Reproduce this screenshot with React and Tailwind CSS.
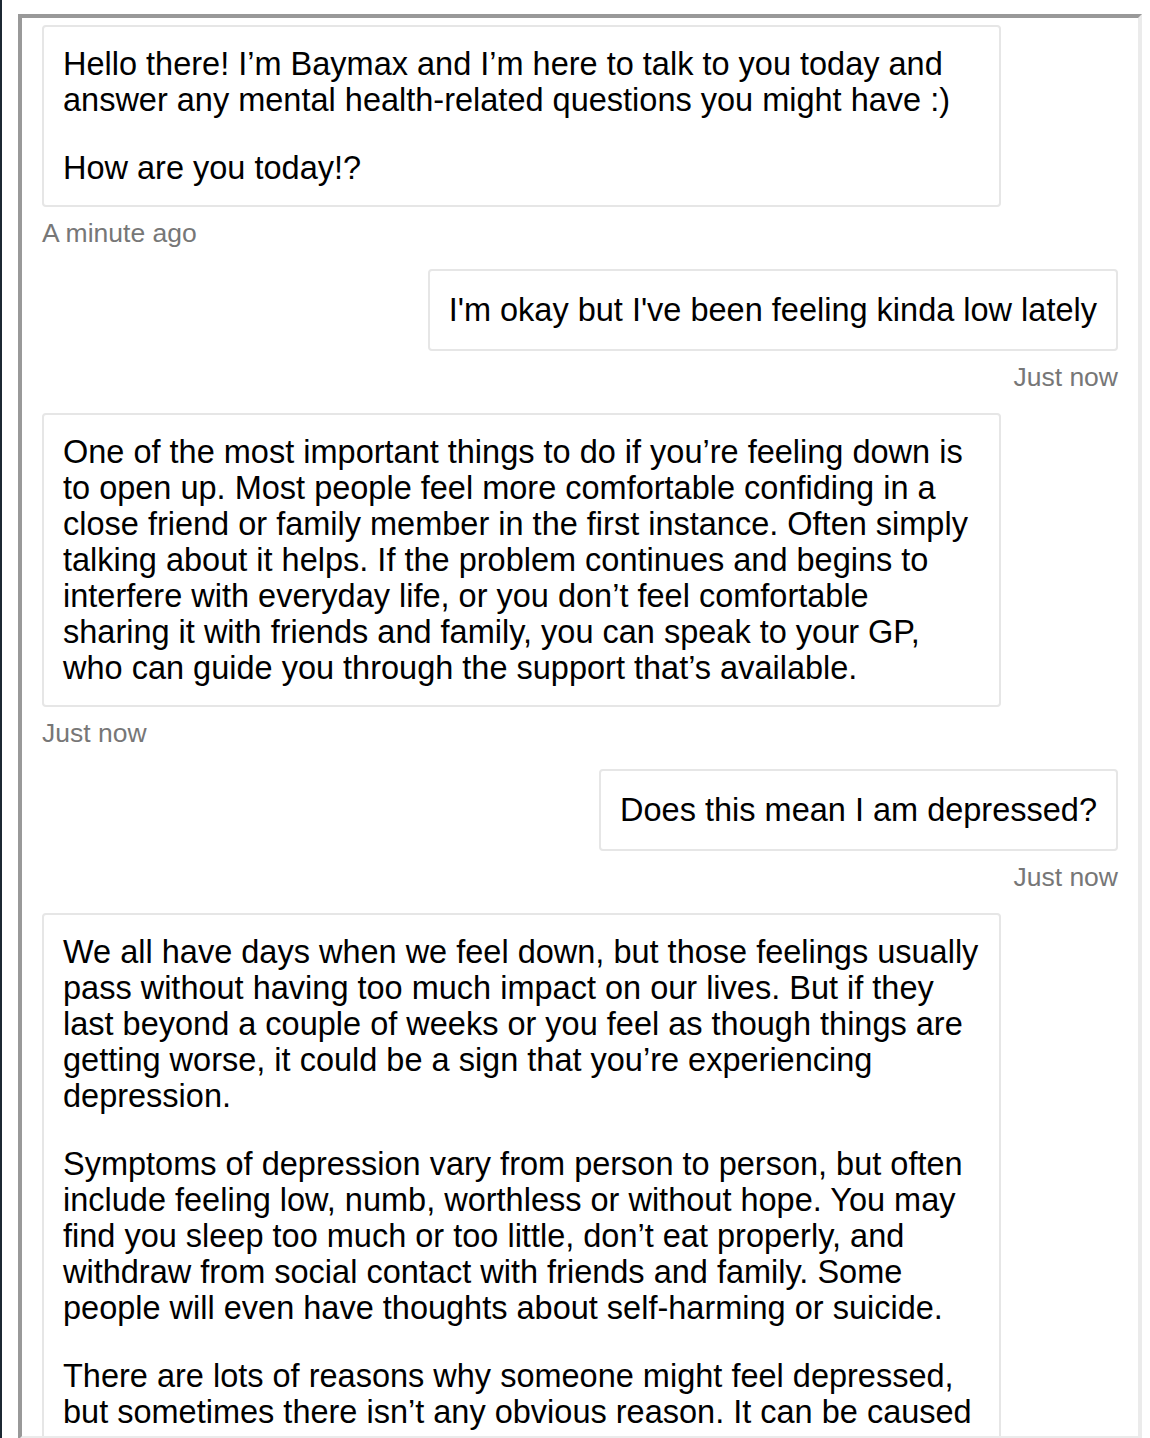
import React from "react";

// each paragraph is a list of lines, broken where the original wraps
const messages = [
  {
    from: "bot",
    time: "A minute ago",
    paragraphs: [
      [
        "Hello there! I’m Baymax and I’m here to talk to you today and",
        "answer any mental health-related questions you might have :)",
      ],
      ["How are you today!?"],
    ],
  },
  {
    from: "user",
    time: "Just now",
    paragraphs: [["I'm okay but I've been feeling kinda low lately"]],
  },
  {
    from: "bot",
    time: "Just now",
    paragraphs: [
      [
        "One of the most important things to do if you’re feeling down is",
        "to open up. Most people feel more comfortable confiding in a",
        "close friend or family member in the first instance. Often simply",
        "talking about it helps. If the problem continues and begins to",
        "interfere with everyday life, or you don’t feel comfortable",
        "sharing it with friends and family, you can speak to your GP,",
        "who can guide you through the support that’s available.",
      ],
    ],
  },
  {
    from: "user",
    time: "Just now",
    paragraphs: [["Does this mean I am depressed?"]],
  },
  {
    from: "bot",
    // still scrolled past the bottom edge, no timestamp in view
    paragraphs: [
      [
        "We all have days when we feel down, but those feelings usually",
        "pass without having too much impact on our lives. But if they",
        "last beyond a couple of weeks or you feel as though things are",
        "getting worse, it could be a sign that you’re experiencing",
        "depression.",
      ],
      [
        "Symptoms of depression vary from person to person, but often",
        "include feeling low, numb, worthless or without hope. You may",
        "find you sleep too much or too little, don’t eat properly, and",
        "withdraw from social contact with friends and family. Some",
        "people will even have thoughts about self-harming or suicide.",
      ],
      [
        "There are lots of reasons why someone might feel depressed,",
        "but sometimes there isn’t any obvious reason. It can be caused",
      ],
    ],
  },
];

const Message = ({ msg }) => {
  const isUser = msg.from === "user";
  return (
    <div className={`mb-[21px] flex flex-col ${isUser ? "items-end" : "items-start"}`}>
      <div
        className={`rounded-[4px] border-2 border-[#e6e6e6] bg-white px-[19px] text-[32.5px] leading-[36px] whitespace-nowrap text-black ${
          isUser ? "py-[21px]" : "w-[959px] py-[19px]"
        }`}
      >
        {msg.paragraphs.map((lines, i) => (
          <p key={i} className={i > 0 ? "mt-[32px]" : ""}>
            {lines.map((line, j) => (
              <React.Fragment key={j}>
                {j > 0 && <br />}
                {line}
              </React.Fragment>
            ))}
          </p>
        ))}
      </div>
      {msg.time && (
        <div className="mt-[11px] text-[26.5px] leading-[30px] text-[#777777]">{msg.time}</div>
      )}
    </div>
  );
};

const App = () => {
  return (
    <div
      className="relative h-[1438px] w-[1150px] overflow-hidden bg-white"
      style={{ fontFamily: '"Liberation Sans", Arial, Helvetica, sans-serif' }}
    >
      <div className="absolute left-0 top-0 h-full w-[2px] bg-[#1c2833]" />
      <div className="ml-[18px] mt-[14px] h-[1426px] w-[1124px] overflow-hidden border-4 border-t-[#999999] border-l-[#999999] border-r-[#ebebeb] border-b-[#ebebeb]">
        <div className="px-[20px] pt-[7px]">
          {messages.map((m, i) => (
            <Message key={i} msg={m} />
          ))}
        </div>
      </div>
    </div>
  );
};

export default App;
